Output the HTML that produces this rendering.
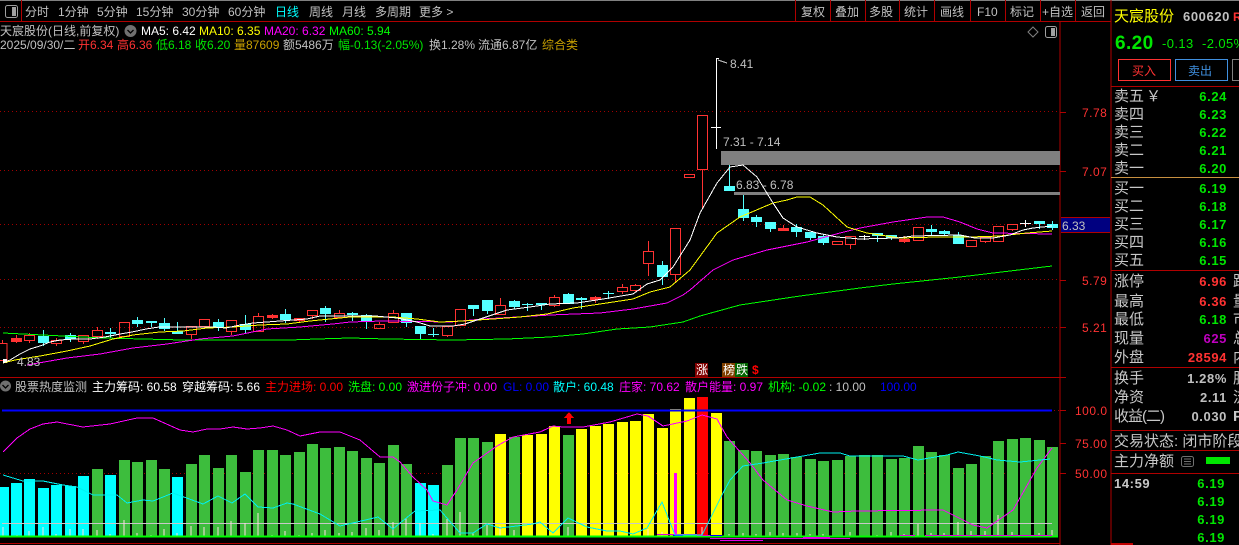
<!DOCTYPE html>
<html><head><meta charset="utf-8"><style>
html,body{margin:0;padding:0;background:#000;width:1239px;height:545px;overflow:hidden}
body{position:relative;font-family:"Liberation Sans","WenQuanYi Zen Hei","Noto Sans CJK SC",sans-serif;font-size:12px;color:#c0c0c0}
span{position:absolute;white-space:nowrap;line-height:14px;height:14px}
svg{position:absolute;left:0;top:0}
.l{font-size:15px;line-height:18px;height:18px;left:1114px;color:#c8c8c8}
.v{font-weight:bold;font-size:13px;line-height:18px;height:18px;right:12px;letter-spacing:.6px;color:#00e600}
.c{left:1233px;font-size:15px;line-height:18px;height:18px;color:#c8c8c8}
.r{color:#ff3232}.g{color:#00e600}.m{color:#ff00ff}.y{color:#ffff00}.w{color:#fff}.cy{color:#00ffff}
.ax{color:#ff3232;font-size:12px;letter-spacing:.5px}
</style></head><body>
<svg width="1239" height="545" viewBox="0 0 1239 545" fill="none">
<g shape-rendering="crispEdges">
<path d="M0 0.5H1239" stroke="#808080"/>
<path d="M0 111.5H1060M0 170.5H1060M0 224.5H1060M0 279.5H1060M0 327.5H1060M0 473.5H1060M1030 410.5H1060" stroke="#a00000" stroke-dasharray="1 3"/>
<!-- volume bars -->
<path fill="#3dbd3d" d="M92 469h11V536h-11zM119 460h11V536h-11zM132 462h11V536h-11zM146 460h11V536h-11zM159 469h11V536h-11zM186 464h11V536h-11zM199 455h11V536h-11zM213 468h11V536h-11zM226 455h11V536h-11zM240 472h11V536h-11zM253 450h11V536h-11zM267 450h11V536h-11zM280 455h11V536h-11zM294 452h11V536h-11zM307 444h11V536h-11zM320 448h11V536h-11zM334 447h11V536h-11zM347 451h11V536h-11zM361 458h11V536h-11zM374 463h11V536h-11zM388 445h11V536h-11zM401 464h11V536h-11zM442 465h11V536h-11zM455 438h11V536h-11zM468 438h11V536h-11zM482 442h11V536h-11zM509 437h11V536h-11zM563 435h11V536h-11zM724 441h11V536h-11zM738 450h11V536h-11zM751 451h11V536h-11zM765 455h11V536h-11zM778 454h11V536h-11zM791 457h11V536h-11zM805 459h11V536h-11zM818 461h11V536h-11zM832 460h11V536h-11zM845 456h11V536h-11zM859 455h11V536h-11zM872 455h11V536h-11zM886 459h11V536h-11zM899 458h11V536h-11zM913 446h11V536h-11zM926 452h11V536h-11zM939 455h11V536h-11zM953 468h11V536h-11zM966 464h11V536h-11zM980 456h11V536h-11zM993 441h11V536h-11zM1007 439h11V536h-11zM1020 438h11V536h-11zM1034 440h11V536h-11zM1047 447h11V536h-11z"/>
<path fill="#00ffff" d="M0 487h9V536h-9zM11 483h11V536h-11zM24 479h11V536h-11zM38 488h11V536h-11zM51 485h11V536h-11zM65 486h11V536h-11zM78 476h11V536h-11zM105 475h11V536h-11zM172 477h11V536h-11zM415 483h11V536h-11zM428 485h11V536h-11z"/>
<path fill="#ffff00" d="M495 434h11V536h-11zM522 435h11V536h-11zM536 434h11V536h-11zM549 426h11V536h-11zM576 429h11V536h-11zM590 426h11V536h-11zM603 424h11V536h-11zM617 422h11V536h-11zM630 421h11V536h-11zM643 414h11V536h-11zM657 428h11V536h-11zM670 409h11V536h-11zM684 398h11V536h-11zM711 413h11V536h-11z"/>
<path fill="#ff0000" d="M697 397h11V536h-11z"/>
<path fill="#ff00ff" d="M674 473h3V536h-3z"/>
<path fill="#ff0000" d="M569 412l5 6h-3v6h-4v-6h-3z"/>
<!-- lines in lower panel -->
<path d="M2 410.5H1052" stroke="#0000ff" stroke-width="1.6"/>
<path d="M2 523.5H1052" stroke="#c8c8c8"/>
<path d="M3 527V536M17 535V536M29 531V536M43 527V536M56 534V536M70 529V536M83 529V536M97 530V536M110 534V536M124 520V536M137 533V536M151 535V536M164 529V536M177 533V536M191 526V536M204 527V536M218 527V536M231 521V536M245 523V536M258 513V536M272 535V536M285 531V536M299 535V536M312 533V536M325 530V536M339 533V536M352 532V536M366 528V536M379 530V536M393 522V536M406 518V536M420 523V536M433 534V536M447 519V536M460 512V536M473 533V536M487 525V536M500 526V536M514 530V536M568 527V536M648 529V536M662 532V536M702 527V536M729 534V536M743 533V536M756 534V536M770 532V536M783 533V536M797 533V536M810 534V536M823 534V536M850 532V536M877 535V536M891 532V536M904 534V536M918 524V536M931 533V536M944 533V536M958 522V536M971 531V536M985 531V536M998 515V536M1012 532V536M1039 533V536M1052 530V536" stroke="#ffe0e0"/>
<path d="M0 536.5H1058" stroke="#00ff00" stroke-width="1.6"/>
<path d="M657 534.5H697M697 535.5H710M710 538.5H850M900 535.5H915M925 535.5H1052M720 540.5H763M777 538.5H803M803 537.5H830" stroke="#e000e0"/>
<path d="M673 535.5H683M710 535.5H722" stroke="#0000ff"/>
<!-- frame -->
<path d="M0 21.5H1060M1060 21.5H1111M0 377.5H1060M0 543.5H1060M1060 22V545M1111 0V545M1111 86.5H1239M1111 270.5H1239M1111 367.5H1239M1111 430.5H1239M1111 450.5H1239M1111 473.5H1239M1060 377.5H1066M1060 112.5H1066M1060 171.5H1066M1060 280.5H1066M1060 327.5H1066M1060 410.5H1066M1060 443.5H1066M1060 473.5H1066M795.5 0V21M830.5 0V21M865.5 0V21M899.5 0V21M934.5 0V21M970.5 0V21M1005.5 0V21M1040.5 0V21M1075.5 0V21M21.5 0V21" stroke="#b00000"/>
<path d="M1111 177.5H1239" stroke="#c89040"/>
<path d="M1111 543h22v2h-22z" fill="#c00000"/>
<path d="M1061 217h49v16h-49z" fill="#000080"/>
<path d="M1061 217.5h49M1061 232.5h49" stroke="#b00000"/>
<path d="M721 151H1060V165H721zM734 192H1060V195H734z" fill="#808080"/>
<!-- red candles -->
<path stroke="#ff3232" d="M-3 343.5h10V360.5h-10zM2.5 340V343M11.5 338.5h10v3h-10zM16.5 335v3M16.5 342v1M24.5 335.5h10v5h-10zM29.5 333v2M29.5 341v2M51.5 340.5h10v3h-10zM56.5 338v2M56.5 344v2M78.5 335.5h10v6h-10zM83.5 342v2M92.5 330.5h10v6h-10zM97.5 327v3M97.5 337v2M119.5 322.5h10v14h-10zM186.5 326.5h10v8h-10zM191.5 335v4M199.5 319.5h10v7h-10zM204.5 327v1M226.5 320.5h10v11h-10zM231.5 332v3M253.5 316.5h10v15h-10zM258.5 313v3M267.5 315.5h10v2h-10zM272.5 314v5M294.5 318.5h10v2h-10zM299.5 321v2M307.5 310.5h10v5h-10zM312.5 316v3M334.5 313.5h10v4h-10zM339.5 310v3M374.5 324.5h10v4h-10zM379.5 322v2M388.5 313.5h10v9h-10zM393.5 310v3M442.5 326.5h10v9h-10zM447.5 336v1M455.5 309.5h10v16h-10zM495.5 305.5h10v9h-10zM500.5 298v7M549.5 297.5h10v8h-10zM554.5 295v2M554.5 306v1M590.5 297.5h10v2h-10zM595.5 296v7M617.5 287.5h10v4h-10zM622.5 284v3M622.5 292v2M630.5 285.5h10v5h-10zM635.5 284v1M635.5 291v1M643.5 251.5h10v12h-10zM648.5 241v10M648.5 264v12M670.5 228.5h10v46h-10zM675.5 275v7M684.5 174.5h10v3h-10zM697.5 115.5h10v54h-10zM702.5 170v38M778.5 228.5h10v2h-10zM783.5 225v6M832.5 241.5h10v3h-10zM845.5 236.5h10v8h-10zM850.5 245v4M899.5 239.5h10v2h-10zM904.5 236v7M913.5 227.5h10v13h-10zM966.5 240.5h10v6h-10zM980.5 237.5h10v4h-10zM985.5 242v1M993.5 226.5h10v15h-10zM1007.5 224.5h10v5h-10zM1012.5 230v1"/>
<path fill="#ff3232" d="M11 338h11v3h-11zM267 315h11v2h-11zM294 318h11v2h-11zM590 297h11v2h-11zM778 228h11v2h-11zM899 239h11v2h-11z"/>
<!-- cyan candles -->
<path fill="#54ffff" d="M38 336h11v7h-11zM65 335h11v4h-11zM105 332h11v2h-11zM132 320h11v4h-11zM146 321h11v2h-11zM159 323h11v6h-11zM172 331h11v3h-11zM213 322h11v5h-11zM240 324h11v6h-11zM280 314h11v6h-11zM320 308h11v6h-11zM347 313h11v2h-11zM361 315h11v6h-11zM401 313h11v10h-11zM415 326h11v8h-11zM428 334h11v1h-11zM468 305h11v4h-11zM482 300h11v11h-11zM509 301h11v6h-11zM522 304h11v1h-11zM536 303h11v2h-11zM563 294h11v10h-11zM576 298h11v2h-11zM603 293h11v1h-11zM657 265h11v12h-11zM724 186h11v5h-11zM738 209h11v9h-11zM751 217h11v5h-11zM765 222h11v7h-11zM791 227h11v5h-11zM805 232h11v6h-11zM818 236h11v7h-11zM872 233h11v3h-11zM886 235h11v3h-11zM926 229h11v3h-11zM939 231h11v3h-11zM953 235h11v9h-11zM1034 221h11v3h-11zM1047 224h11v4h-11z"/>
<path stroke="#54ffff" d="M43.500 330V346M70.500 333V342M110.500 328V338M137.500 317V327M151.500 323V327M164.500 318V331M177.500 322V334M218.500 319V331M245.500 315V333M285.500 309V323M325.500 306V322M352.500 312V321M366.500 314V329M406.500 323V327M420.500 334V339M433.500 328V337M473.500 309V316M487.500 311V314M514.500 300V309M527.500 303V311M541.500 305V310M568.500 293V304M581.500 297V309M608.500 291V299M662.500 261V285M729.500 165V191M743.500 195V221M756.500 215V227M770.500 229V232M796.500 224V237M810.500 238V240M823.500 234V245M877.500 236V242M891.500 238V240M931.500 225V235M944.500 230V236M958.500 232V235M1039.500 224V229M1052.500 221V230"/>
<!-- white doji -->
<path stroke="#fff" d="M716.500 58V149M711 127.500H721M859 236.500H870M864.500 235V240M1020 223.500H1031M1025.500 220V227M716 58.500h3"/>
<path stroke="#c0c0c0" d="M718 60l9 3"/>
<path fill="#fff" d="M3 359h4v4h-4z"/>
<!-- MA lines -->
<polyline stroke="#00ff00" points="3,333 23,334 63,336 103,338 143,339 183,340 290,340 317,339 350,338 387,339 453,340 507,339 550,337 583,334 617,329 650,327 683,322 700,316 740,305 800,296 860,288 893,284 960,277 1010,271 1052,266"/>
<polyline stroke="#ff00ff" points="27,365 67,358 100,354 133,348 167,344 200,339 233,336 267,329 300,327 333,324 350,322 383,321 450,322 483,319 517,317 550,315 600,313 633,309 667,303 683,295 690,290 713,270 733,260 767,250 807,242 840,233 860,228 893,222 927,217 943,217 960,222 977,229 993,233 1052,234"/>
<polyline stroke="#ffff00" points="3,363 15,360 40,356 67,351 90,346 113,339 133,335 160,332 183,331 207,328 233,327 260,325 287,324 310,321 350,317 393,317 417,319 440,322 463,321 493,319 520,317 547,314 573,308 600,304 633,299 650,292 670,287 690,270 717,233 740,217 773,203 787,200 797,197 810,197 823,205 847,227 867,233 880,235 900,238 937,237 970,237 1000,236 1027,233 1052,231"/>
<polyline stroke="#ffffff" points="3,363 10,360 20,354 30,349 40,346 50,342 60,340 75,339 90,339 105,337 120,334 132,332 146,329 159,327 213,327 226,328 240,325 253,323 280,321 307,319 320,316 350,316 375,316 397,318 417,322 430,326 453,326 465,324 483,318 507,310 530,307 550,304 577,303 603,299 633,294 647,284 660,280 673,267 690,240 700,213 717,183 730,167 743,165 757,177 773,203 783,218 797,227 817,233 837,237 860,239 897,238 913,236 960,235 975,238 993,238 1010,235 1023,230 1033,228 1052,226"/>
<polyline stroke="#ff00ff" points="3,452 17,438 30,429 43,424 57,422 83,427 110,424 137,418 153,418 180,430 193,432 207,429 220,429 233,427 247,429 260,428 273,426 287,430 300,436 320,432 340,432 360,440 380,457 393,457 400,462 413,477 427,490 433,501 447,505 457,490 473,463 497,446 513,437 540,432 553,426 563,427 583,427 610,422 637,414 648,416 663,426 687,421 702,415 717,419 727,437 750,463 763,480 787,500 807,506 833,512 857,511 943,510 973,525 987,528 1013,510 1037,468 1052,448"/>
<polyline stroke="#00f0f0" points="3,475 23,481 43,481 63,485 77,487 93,495 117,495 127,503 143,500 153,501 173,493 203,504 218,496 232,503 245,494 258,507 273,508 287,503 293,504 320,514 340,526 348,524 357,522 378,517 393,529 400,523 415,511 440,510 460,533 473,533 487,524 500,528 533,524 540,522 553,533 568,518 587,527 607,531 620,531 633,534 647,528 662,502 675,535 702,535 722,495 730,480 743,466 763,463 820,453 840,453 850,456 903,456 918,460 947,455 958,452 980,456 997,460 1020,462 1050,459"/>
</g>
<!-- icons -->
<rect x="5.500" y="5.500" width="12" height="12" rx="2" stroke="#a0a0a0"/><rect x="12" y="7" width="4" height="9" fill="#a0a0a0"/>
<rect x="1045.500" y="26.500" width="11" height="11" rx="2" stroke="#a0a0a0"/><rect x="1051" y="28" width="4" height="8" fill="#a0a0a0"/>
<path d="M1033 27l5 5-5 5-5-5z" stroke="#808080"/>
<circle cx="130.500" cy="31" r="6" fill="#707070"/><path d="M127.500 30l3 3 3-3" stroke="#000" stroke-width="1.300"/>
<circle cx="5.500" cy="386" r="5.500" fill="#707070"/><path d="M2.500 385l3 3 3-3" stroke="#000" stroke-width="1.300"/>
<rect x="1181.500" y="456.500" width="12" height="10" rx="2" stroke="#707070"/><path d="M1184 459h7M1184 461.500h7M1184 464h7" stroke="#707070"/>
<rect x="1206" y="457" width="24" height="7" fill="#00e600"/>
<rect x="1118.500" y="59.500" width="52" height="21" stroke="#ff3232"/>
<rect x="1175.500" y="59.500" width="52" height="21" stroke="#4090e0"/>
<rect x="1232.500" y="59.500" width="20" height="21" stroke="#808080"/>
<rect x="695" y="363" width="13" height="14" fill="#800000"/><rect x="722" y="363" width="13" height="14" fill="#804000"/><rect x="735" y="363" width="13" height="14" fill="#006400"/>
</svg>
<span style="left:25px;top:5px">分时</span><span style="left:58px;top:5px">1分钟</span><span style="left:97px;top:5px">5分钟</span><span style="left:136px;top:5px">15分钟</span><span style="left:182px;top:5px">30分钟</span><span style="left:228px;top:5px">60分钟</span><span style="left:275px;top:5px" class="cy">日线</span><span style="left:309px;top:5px">周线</span><span style="left:342px;top:5px">月线</span><span style="left:375px;top:5px">多周期</span><span style="left:419px;top:5px">更多 &gt;</span>
<span style="left:801px;top:5px">复权</span><span style="left:835px;top:5px">叠加</span><span style="left:869px;top:5px">多股</span><span style="left:904px;top:5px">统计</span><span style="left:940px;top:5px">画线</span><span style="left:977px;top:5px">F10</span><span style="left:1010px;top:5px">标记</span><span style="left:1042px;top:5px">+自选</span><span style="left:1081px;top:5px">返回</span>
<span style="left:0;top:24px">天宸股份(日线,前复权)</span><span style="left:141px;top:24px" class="w">MA5: 6.42</span><span style="left:199px;top:24px" class="y">MA10: 6.35</span><span style="left:264px;top:24px" class="m">MA20: 6.32</span><span style="left:329px;top:24px;color:#00ff00">MA60: 5.94</span>
<span style="left:0;top:38px">2025/09/30/二</span><span style="left:78px;top:38px" class="r">开6.34</span><span style="left:117px;top:38px" class="r">高6.36</span><span style="left:156px;top:38px" class="g">低6.18</span><span style="left:195px;top:38px" class="g">收6.20</span><span style="left:234px;top:38px;color:#c8a000">量87609</span><span style="left:283px;top:38px">额5486万</span><span style="left:338px;top:38px" class="g">幅-0.13(-2.05%)</span><span style="left:429px;top:38px">换1.28%</span><span style="left:478px;top:38px">流通6.87亿</span><span style="left:542px;top:38px;color:#c8a000">综合类</span>
<span style="left:730px;top:57px">8.41</span><span style="left:723px;top:135px">7.31 - 7.14</span><span style="left:736px;top:178px">6.83 - 6.78</span><span style="left:17px;top:355px">4.83</span>
<span class="ax" style="left:1082px;top:106px">7.78</span><span class="ax" style="left:1082px;top:165px">7.07</span><span class="ax" style="left:1082px;top:274px">5.79</span><span class="ax" style="left:1082px;top:321px">5.21</span>
<span style="left:1062px;top:219px;font-size:12px">6.33</span>
<span class="ax" style="left:1075px;top:404px">100.0</span><span class="ax" style="left:1075px;top:437px">75.00</span><span class="ax" style="left:1075px;top:467px">50.00</span>
<span style="left:696px;top:363px;color:#fff">涨</span><span style="left:723px;top:363px;color:#fff">榜</span><span style="left:736px;top:363px;color:#fff">跌</span><span style="left:752px;top:363px;color:#ff0000;font-weight:bold">$</span>
<span style="left:15px;top:380px">股票热度监测</span><span style="left:92px;top:380px" class="w">主力筹码: 60.58</span><span style="left:182px;top:380px" class="w">穿越筹码: 5.66</span><span style="left:265px;top:380px;color:#ff0000">主力进场: 0.00</span><span style="left:348px;top:380px;color:#00ff00">洗盘: 0.00</span><span style="left:407px;top:380px" class="m">激进份子冲: 0.00</span><span style="left:503px;top:380px;color:#0000ff">GL: 0.00</span><span style="left:553px;top:380px" class="cy">散户: 60.48</span><span style="left:619px;top:380px" class="m">庄家: 70.62</span><span style="left:685px;top:380px" class="m">散户能量: 0.97</span><span style="left:768px;top:380px;color:#00ff00">机构: -0.02</span><span style="left:829px;top:380px;color:#c0c0c0">: 10.00</span><span style="left:880px;top:380px;color:#0000ff">100.00</span>
<span style="left:1114px;top:8px;font-size:15px;line-height:18px;height:18px" class="y">天宸股份</span><span style="left:1183px;top:10px;font-weight:bold;font-size:13px;letter-spacing:.6px">600620</span><span style="left:1233px;top:10px;font-weight:bold;color:#ff3232">R</span>
<span style="left:1115px;top:34px;font-weight:bold;font-size:19px;line-height:20px;height:20px;letter-spacing:.4px;color:#00e600">6.20</span><span style="left:1162px;top:37px;font-size:13px;letter-spacing:.4px" class="g">-0.13</span><span style="left:1202px;top:37px;font-size:13px;letter-spacing:.4px" class="g">-2.05%</span>
<span style="left:1132px;top:64px;color:#ff3232">买入</span><span style="left:1188px;top:64px;color:#4090e0">卖出</span>
<span class="l" style="top:88px">卖五</span><span class="l" style="top:88px;left:1146px">￥</span><span class="v" style="top:88px">6.24</span>
<span class="l" style="top:106px">卖四</span><span class="v" style="top:106px">6.23</span>
<span class="l" style="top:124px">卖三</span><span class="v" style="top:124px">6.22</span>
<span class="l" style="top:142px">卖二</span><span class="v" style="top:142px">6.21</span>
<span class="l" style="top:160px">卖一</span><span class="v" style="top:160px">6.20</span>
<span class="l" style="top:180px">买一</span><span class="v" style="top:180px">6.19</span>
<span class="l" style="top:198px">买二</span><span class="v" style="top:198px">6.18</span>
<span class="l" style="top:216px">买三</span><span class="v" style="top:216px">6.17</span>
<span class="l" style="top:234px">买四</span><span class="v" style="top:234px">6.16</span>
<span class="l" style="top:252px">买五</span><span class="v" style="top:252px">6.15</span>
<span class="l" style="top:273px">涨停</span><span class="v" style="top:273px;color:#ff3232">6.96</span><span class="c" style="top:273px">跌</span>
<span class="l" style="top:293px">最高</span><span class="v" style="top:293px;color:#ff3232">6.36</span><span class="c" style="top:293px">量</span>
<span class="l" style="top:311px">最低</span><span class="v" style="top:311px">6.18</span><span class="c" style="top:311px">市</span>
<span class="l" style="top:330px">现量</span><span class="v" style="top:330px;color:#c000c0">625</span><span class="c" style="top:330px">总</span>
<span class="l" style="top:349px">外盘</span><span class="v" style="top:349px;color:#ff3232">28594</span><span class="c" style="top:349px">内</span>
<span class="l" style="top:370px">换手</span><span class="v" style="top:370px;color:#c0c0c0">1.28%</span><span class="c" style="top:370px">股</span>
<span class="l" style="top:389px">净资</span><span class="v" style="top:389px;color:#c0c0c0">2.11</span><span class="c" style="top:389px">流</span>
<span class="l" style="top:408px;letter-spacing:-1px">收益(二)</span><span class="v" style="top:408px;color:#c0c0c0">0.030</span><span class="c" style="top:408px;font-weight:bold">P</span>
<span class="l" style="top:433px">交易状态: 闭市阶段</span>
<span class="l" style="top:453px">主力净额</span>
<span class="v" style="top:475px;left:1114px;right:auto;color:#c8c8c8">14:59</span>
<span class="v" style="top:475px;right:14px">6.19</span><span class="v" style="top:493px;right:14px">6.19</span><span class="v" style="top:511px;right:14px">6.19</span><span class="v" style="top:529px;right:14px">6.19</span>
</body></html>
